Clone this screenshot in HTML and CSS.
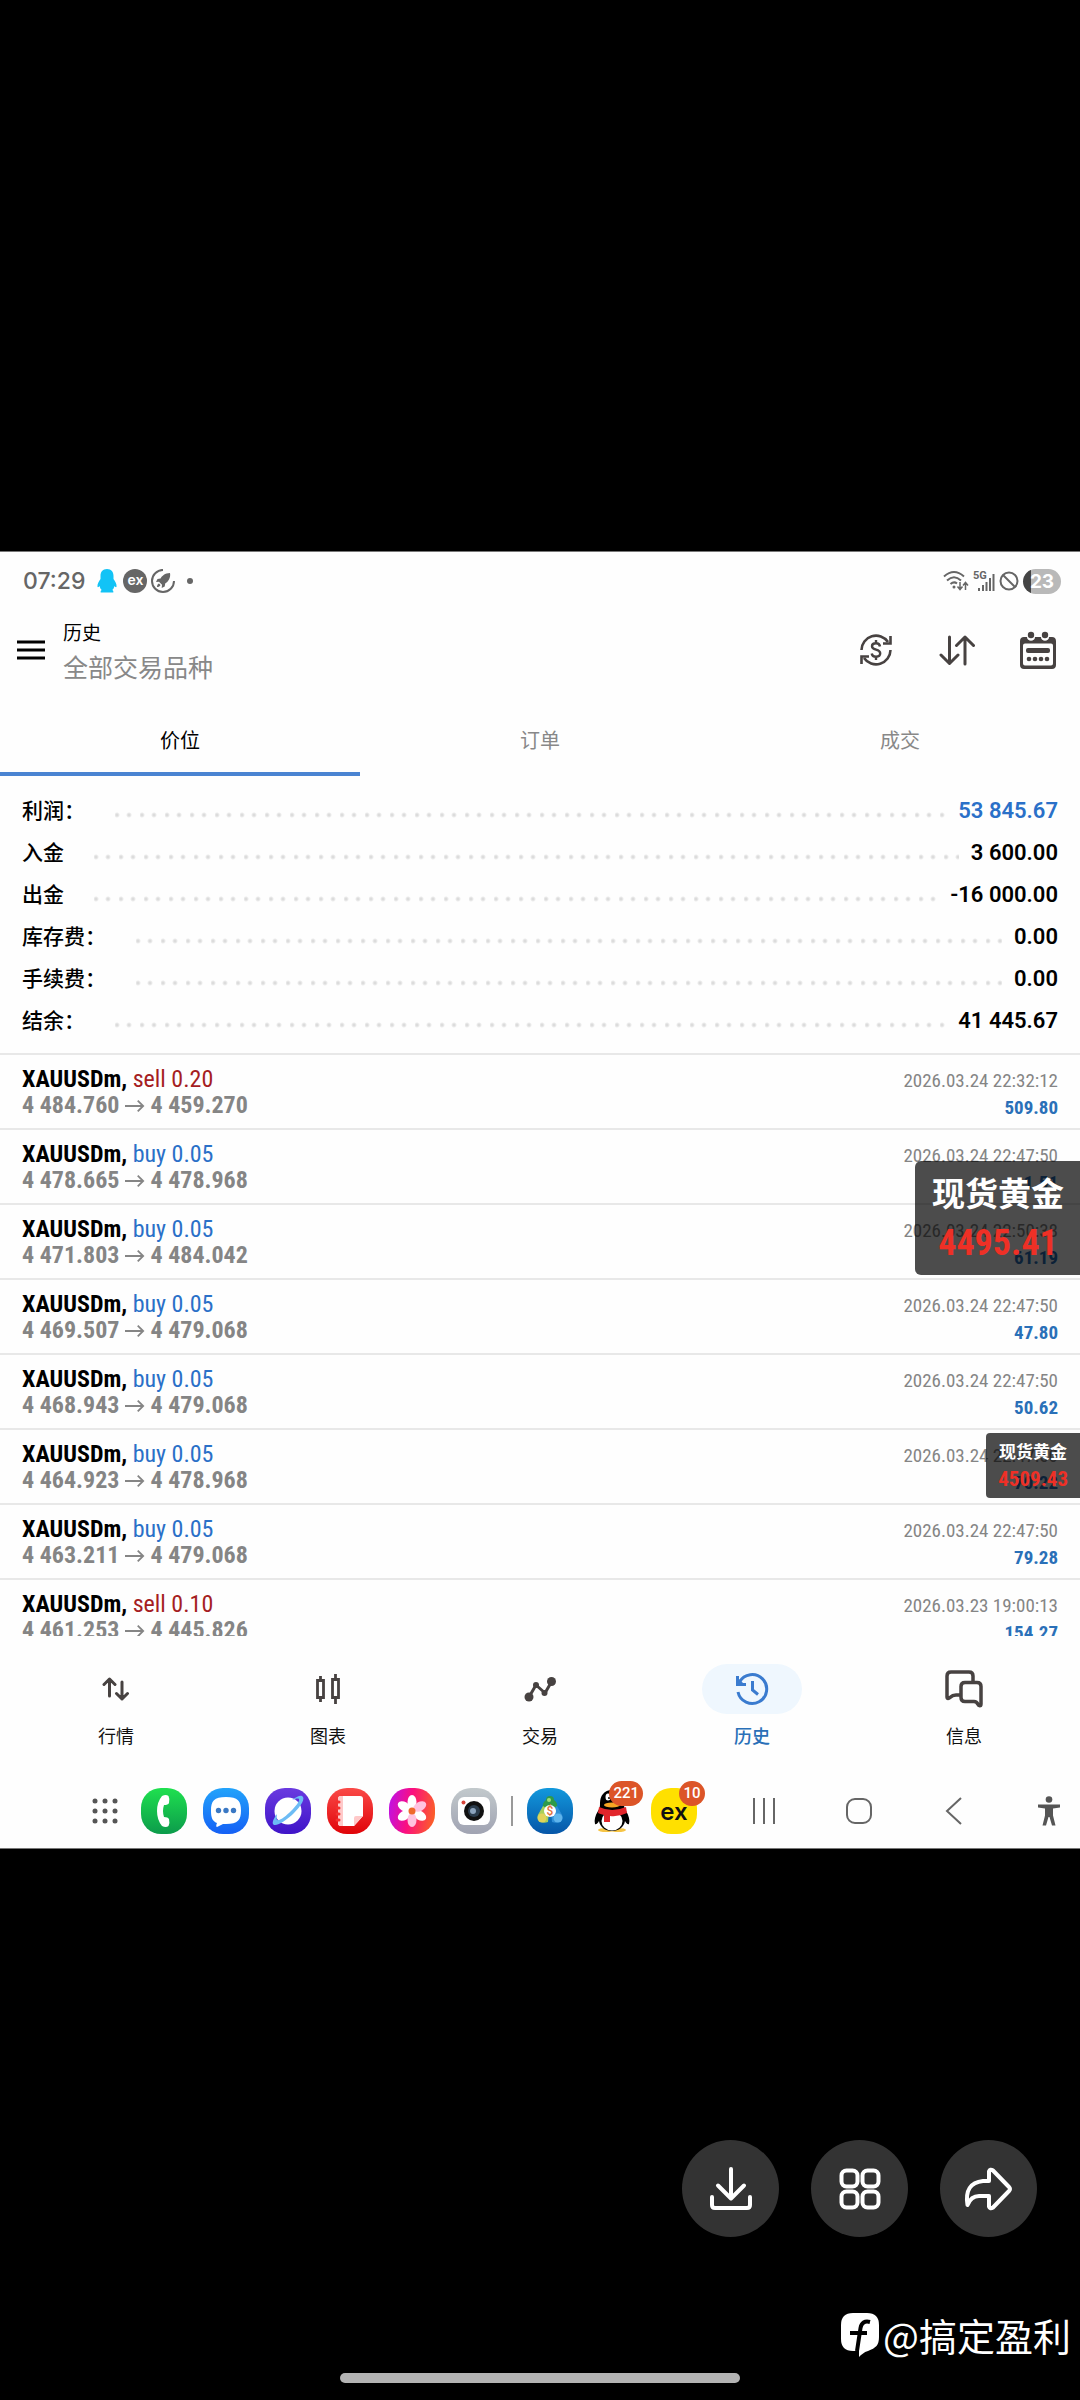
FILE: index.html
```html
<!DOCTYPE html>
<html lang="zh-CN">
<head>
   <meta charset="utf-8">
   <meta name="viewport" content="width=device-width, initial-scale=1">
   <title>历史</title>
   <link rel="stylesheet" href="styles.css">
</head>
<body>
   <div class="viewer">
      <main class="screen">

         <!-- status bar -->
         <div class="status-bar">
            <span class="clock">07:29</span>
            <svg class="st-qq" width="20" height="24" viewBox="0 0 20 24"><path fill="#12c3f6" d="M10 0c4.500 0 6.500 3 6.500 7v3c1.500 2 3.500 5 3 8-.8.500-1.500-.4-2.200-1-.2 2-1 3-2 4 1 .6 1.200 1.500 1 2.500H3.700c-.2-1 0-1.900 1-2.500-1-1-1.800-2-2-4-.7.600-1.400 1.500-2.200 1-.5-3 1.500-6 3-8V7c0-4 2-7 6.500-7z"/></svg>
            <span class="st-ex">ex</span>
            <svg class="st-rocket" width="24" height="24" viewBox="0 0 24 24"><path fill="none" stroke="#666" stroke-width="2" d="M12 1A11 11 0 1 0 23 12M4 4.500A11 11 0 0 1 12 1"/><path fill="#666" d="M19 4c-5 0-8 3-9.500 5.500L6.500 10 5 13l3-.3 3 3L10.700 19l3-1.500.500-3C17 13 20 9 19 4zM8 14.500c-1.500.500-2 2-2 3.500 1.500 0 3-.5 3.500-2z"/></svg>
            <span class="st-dot"></span>
            <span class="status-right">
               <svg width="26" height="22" viewBox="0 0 26 22"><g fill="none" stroke="#666" stroke-width="2"><path d="M1 6.500Q11-2.500 21 6.500M4 10.500Q11 4 18 10.500M7.500 14Q11 11 14 13.500"/><path stroke-width="1.500" d="M17 12v7M14.500 16.500l2.500 3 2.500-3M22.500 20v-7M20 15.500l2.500-3 2.500 3"/></g><circle cx="11" cy="17" r="1.500" fill="#666"/></svg>
               <svg width="22" height="22" viewBox="0 0 22 22"><text x="0" y="9" class="st-5g">5G</text><path stroke="#666" stroke-width="2" d="M6 21v-3M10 21v-6M13.500 21v-9M17 21V8M20.500 21V4"/></svg>
               <svg width="20" height="20" viewBox="0 0 20 20"><circle cx="10" cy="10" r="8.500" fill="none" stroke="#666" stroke-width="2"/><path stroke="#666" stroke-width="2" d="M4 4l12 12"/></svg>
               <span class="battery">23</span>
            </span>
         </div>

         <!-- app bar -->
         <header class="app-bar">
            <button class="icon-btn menu-btn" aria-label="菜单">
               <svg width="28" height="20" viewBox="0 0 28 20"><path stroke="#000" stroke-width="3" d="M0 2h28M0 10h28M0 18h28"/></svg>
            </button>
            <div class="titles">
               <h1 class="title">历史</h1>
               <p class="subtitle">全部交易品种</p>
            </div>
            <div class="actions">
               <button class="icon-btn" aria-label="货币">
                  <svg width="34" height="34" viewBox="0 0 34 34" fill="none" stroke="#474241" stroke-width="2.600"><path d="M2.500 17A14.500 14.500 0 0 1 29 9M31.500 17A14.500 14.500 0 0 1 5 25"/><path d="M31.500 3v7.500h-7.500M2.500 31v-7.500H10"/><path stroke-width="2.400" d="M21 13.500c-.3-2.200-2-3.200-4-3.200-2.300 0-4 1-4 3 0 4.400 8.200 2.400 8.200 7 0 2.200-1.800 3.400-4.200 3.400-2.200 0-4-1.200-4.300-3.200M17 7v3.500M17 23.500V27"/></svg>
               </button>
               <button class="icon-btn" aria-label="排序">
                  <svg width="36" height="32" viewBox="0 0 36 32" fill="none" stroke="#474241" stroke-width="3" stroke-linejoin="round" stroke-linecap="round"><path d="M10.500 3v26M2 21l8.500 8.500L19 21M26 30V3M17.500 11.500L26 3l8.500 8.500"/></svg>
               </button>
               <button class="icon-btn" aria-label="日期">
                  <svg width="36" height="38" viewBox="0 0 36 38"><path fill="#474241" fill-rule="evenodd" d="M4 6h3c0 5 8 5 8 0h6c0 5 8 5 8 0h3c2.500 0 4 1.500 4 4v24c0 2.500-1.500 4-4 4H4c-2.500 0-4-1.500-4-4V10c0-2.500 1.500-4 4-4zM5 12.500q-2 0-2 2v18q0 2 2 2h26q2 0 2-2v-18q0-2-2-2z"/><g fill="#474241"><circle cx="11" cy="4" r="3.200"/><circle cx="25" cy="4" r="3.200"/><rect x="6" y="17" width="24" height="5" rx="2"/><circle cx="9" cy="28" r="2.300"/><circle cx="15" cy="28" r="2.300"/><circle cx="21" cy="28" r="2.300"/><circle cx="27" cy="28" r="2.300"/></g></svg>
               </button>
            </div>
         </header>

         <nav class="tabs">
            <button class="tab tab-selected">价位</button>
            <button class="tab">订单</button>
            <button class="tab">成交</button>
         </nav>

         <!-- account totals -->
         <dl class="summary">
            <div class="sum-row"><dt>利润：</dt><dd class="profit">53 845.67</dd></div>
            <div class="sum-row"><dt>入金</dt><dd>3 600.00</dd></div>
            <div class="sum-row"><dt>出金</dt><dd>-16 000.00</dd></div>
            <div class="sum-row"><dt>库存费：</dt><dd>0.00</dd></div>
            <div class="sum-row"><dt>手续费：</dt><dd>0.00</dd></div>
            <div class="sum-row"><dt>结余：</dt><dd>41 445.67</dd></div>
         </dl>

         <div class="history">
            <ul class="deals">
               <li class="deal">
                  <div><p class="symbol">XAUUSDm,<span class="sell"> sell 0.20</span></p><p class="prices">4 484.760 <svg class="arrow" viewBox="0 0 22 14"><path d="M0 7h20M14 1l6 6-6 6"/></svg> 4 459.270</p></div>
                  <div class="deal-right"><time>2026.03.24 22:32:12</time><p class="amount">509.80</p></div>
               </li>
               <li class="deal">
                  <div><p class="symbol">XAUUSDm,<span class="buy"> buy 0.05</span></p><p class="prices">4 478.665 <svg class="arrow" viewBox="0 0 22 14"><path d="M0 7h20M14 1l6 6-6 6"/></svg> 4 478.968</p></div>
                  <div class="deal-right"><time>2026.03.24 22:47:50</time><p class="amount">1.51</p></div>
               </li>
               <li class="deal">
                  <div><p class="symbol">XAUUSDm,<span class="buy"> buy 0.05</span></p><p class="prices">4 471.803 <svg class="arrow" viewBox="0 0 22 14"><path d="M0 7h20M14 1l6 6-6 6"/></svg> 4 484.042</p></div>
                  <div class="deal-right"><time>2026.03.24 22:50:38</time><p class="amount">61.19</p></div>
               </li>
               <li class="deal">
                  <div><p class="symbol">XAUUSDm,<span class="buy"> buy 0.05</span></p><p class="prices">4 469.507 <svg class="arrow" viewBox="0 0 22 14"><path d="M0 7h20M14 1l6 6-6 6"/></svg> 4 479.068</p></div>
                  <div class="deal-right"><time>2026.03.24 22:47:50</time><p class="amount">47.80</p></div>
               </li>
               <li class="deal">
                  <div><p class="symbol">XAUUSDm,<span class="buy"> buy 0.05</span></p><p class="prices">4 468.943 <svg class="arrow" viewBox="0 0 22 14"><path d="M0 7h20M14 1l6 6-6 6"/></svg> 4 479.068</p></div>
                  <div class="deal-right"><time>2026.03.24 22:47:50</time><p class="amount">50.62</p></div>
               </li>
               <li class="deal">
                  <div><p class="symbol">XAUUSDm,<span class="buy"> buy 0.05</span></p><p class="prices">4 464.923 <svg class="arrow" viewBox="0 0 22 14"><path d="M0 7h20M14 1l6 6-6 6"/></svg> 4 478.968</p></div>
                  <div class="deal-right"><time>2026.03.24 22:47:50</time><p class="amount">70.22</p></div>
               </li>
               <li class="deal">
                  <div><p class="symbol">XAUUSDm,<span class="buy"> buy 0.05</span></p><p class="prices">4 463.211 <svg class="arrow" viewBox="0 0 22 14"><path d="M0 7h20M14 1l6 6-6 6"/></svg> 4 479.068</p></div>
                  <div class="deal-right"><time>2026.03.24 22:47:50</time><p class="amount">79.28</p></div>
               </li>
               <li class="deal">
                  <div><p class="symbol">XAUUSDm,<span class="sell"> sell 0.10</span></p><p class="prices">4 461.253 <svg class="arrow" viewBox="0 0 22 14"><path d="M0 7h20M14 1l6 6-6 6"/></svg> 4 445.826</p></div>
                  <div class="deal-right"><time>2026.03.23 19:00:13</time><p class="amount">154.27</p></div>
               </li>
            </ul>
            <!-- floating quote windows -->
            <aside class="quote quote-big"><p>现货黄金</p><p class="quote-price">4495.41</p></aside>
            <aside class="quote quote-small"><p>现货黄金</p><p class="quote-price">4509.43</p></aside>
         </div>

         <nav class="bottom-nav">
            <a href="#quotes" class="nav-item">
               <span class="nav-icon"><svg width="28" height="26" viewBox="0 0 28 26" fill="none" stroke="#474241" stroke-width="3" stroke-linecap="round" stroke-linejoin="round"><path d="M7.500 20V3M2 8.500L7.500 3 13 8.500M20 6v17M14.500 17.500L20 23l5.500-5.500"/></svg></span>行情</a>
            <a href="#charts" class="nav-item">
               <span class="nav-icon"><svg width="26" height="32" viewBox="0 0 26 32" fill="none" stroke="#474241" stroke-width="2.800"><path d="M2.500 7.500h6v17h-6zM5.500 3v4M5.500 25v4M17.500 6.500h6v18h-6zM20.500 1v5M20.500 25v6"/></svg></span>图表</a>
            <a href="#trade" class="nav-item">
               <span class="nav-icon"><svg width="32" height="28" viewBox="0 0 32 28"><path fill="none" stroke="#474241" stroke-width="3" stroke-linejoin="round" d="M5 22l7-12 9 8 7-12"/><g fill="#474241"><circle cx="5" cy="22" r="4.500"/><circle cx="12" cy="10" r="3"/><circle cx="20.500" cy="18" r="3"/><circle cx="27.500" cy="6.500" r="4.500"/></g></svg></span>交易</a>
            <a href="#history" class="nav-item nav-selected">
               <span class="nav-icon"><svg width="34" height="34" viewBox="0 0 34 34" fill="none" stroke="#3a7bcf" stroke-width="3"><path d="M3 20a14.500 14.500 0 1 0 1.500-10"/><path d="M2.500 4v8.500h8.500"/><path fill="#3a7bcf" stroke="none" d="M2 5l9 9H2z"/><path d="M17.500 9v9l5.500 4.500"/></svg></span>历史</a>
            <a href="#messages" class="nav-item">
               <span class="nav-icon"><svg width="40" height="38" viewBox="0 0 40 38" fill="none" stroke="#474241" stroke-width="3.500" stroke-linejoin="round"><path d="M29 11V6q0-4-4-4H7Q3 2 3 6v21c0 2 2 1.500 3 .5 2-2 4-2.500 6-2.500h5"/><path d="M21 12.500h12q4 0 4 4V34c0 2.500-2.500 2-3 .5-.8-2-2-3-4-3h-9q-4 0-4-4v-11q0-4 4-4z"/></svg></span>信息</a>
         </nav>

         <!-- system taskbar -->
         <div class="taskbar">
            <button class="task-btn apps-btn" aria-label="应用">
               <svg width="26" height="26" viewBox="0 0 26 26" fill="#555"><circle cx="3" cy="3" r="2.500"/><circle cx="13" cy="3" r="2.500"/><circle cx="23" cy="3" r="2.500"/><circle cx="3" cy="13" r="2.500"/><circle cx="13" cy="13" r="2.500"/><circle cx="23" cy="13" r="2.500"/><circle cx="3" cy="23" r="2.500"/><circle cx="13" cy="23" r="2.500"/><circle cx="23" cy="23" r="2.500"/></svg>
            </button>
            <div class="dock">
               <button class="task-btn app app-phone" aria-label="电话"><svg viewBox="0 0 46 46"><path fill="#fff" d="M21 8q4-2 6.500 0 1.500 3 .5 7-1 2-5 2-2 6 0 12 4 0 5 2 1 4-.5 7-2.500 2-6.500 0-5-6-5-15T21 8z"/></svg></button>
               <button class="task-btn app app-sms" aria-label="信息"><svg viewBox="0 0 46 46"><path fill="#fff" d="M23 9c12 0 15 4 15 13.500S35 36 23 36h-3l-6 3c-1 0-1-2 0-4-5-2-6-6-6-12.500C8 13 11 9 23 9z"/><g fill="#3a78c4"><circle cx="15.500" cy="22.500" r="2.700"/><circle cx="23" cy="22.500" r="2.700"/><circle cx="30.500" cy="22.500" r="2.700"/></g></svg></button>
               <button class="task-btn app app-web" aria-label="浏览器"><svg viewBox="0 0 46 46"><circle cx="23" cy="23" r="13.500" fill="#fff"/><path fill="#6dbcf5" d="M37 8c4 2-1 10-8 17S10 40 8 36c-1-2 1-6 4-10 0 3-1 5 0 6 3 1 9-4 14-9s9-10 8-12c-1-1-4 0-7 1 4-3 8-5 10-4z"/></svg></button>
               <button class="task-btn app app-notes" aria-label="笔记"><svg viewBox="0 0 46 46"><path fill="#fff" d="M14 8h19q3 0 3 3v17L27 38H14q-3 0-3-3V11q0-3 3-3z"/><path fill="#ffc9c9" d="M11 11q0-3 3-3h2v30h-2q-3 0-3-3zM36 28H29q-2 0-2 2v8z"/><path stroke="#f4302f" stroke-width="3" stroke-linecap="round" d="M10 14h2M10 20h2M10 26h2M10 32h2"/></svg></button>
               <button class="task-btn app app-gallery" aria-label="相册"><svg viewBox="0 0 46 46"><g fill="#fff"><ellipse cx="23" cy="14" rx="4.500" ry="7"/><ellipse cx="23" cy="14" rx="4.500" ry="7" transform="rotate(120 23 23)"/><ellipse cx="23" cy="14" rx="4.500" ry="7" transform="rotate(240 23 23)"/></g><g fill="#ffc3e0"><ellipse cx="23" cy="14" rx="4.500" ry="7" transform="rotate(60 23 23)"/><ellipse cx="23" cy="14" rx="4.500" ry="7" transform="rotate(180 23 23)"/><ellipse cx="23" cy="14" rx="4.500" ry="7" transform="rotate(300 23 23)" fill="#fff"/></g><circle cx="23" cy="23" r="3.500" fill="#ef6a2c"/></svg></button>
               <button class="task-btn app app-camera" aria-label="相机"><svg viewBox="0 0 46 46"><rect x="7" y="9" width="32" height="28" rx="6" fill="#fff"/><circle cx="23" cy="23" r="10" fill="#111"/><circle cx="23" cy="23" r="6" fill="#2b3c4c"/><circle cx="22" cy="23" r="3" fill="#8ba3bd"/><circle cx="12.500" cy="14.500" r="2" fill="#d8453a"/></svg></button>
            </div>
            <span class="dock-sep"></span>
            <div class="dock">
               <button class="task-btn app app-mt" aria-label="MetaTrader"><svg viewBox="0 0 46 46"><path fill="#2f9a4a" d="M23 8q4 0 4 4 4 3 3 7l-4 3h-6l-4-3q-1-4 3-7 0-4 4-4z"/><path fill="#a9cf5a" d="M16 18l6 4-1 12q-5 2-9-1-3-4 0-8z"/><path fill="#2f8fd8" d="M30 18l-6 4 1 12q5 2 9-1 3-4 0-8z"/><circle cx="15" cy="30" r="4.500" fill="#e0d35a"/><circle cx="31" cy="30" r="4.500" fill="#5fb4ec"/><circle cx="22" cy="12" r="2" fill="#9be07c"/><circle cx="23" cy="23" r="6" fill="#fff"/><text x="23" y="27" class="mt-sign">$</text></svg></button>
               <button class="task-btn app" aria-label="QQ"><svg viewBox="0 0 46 46"><ellipse cx="17" cy="42" rx="8" ry="2" fill="#f6c445"/><ellipse cx="29" cy="42" rx="8" ry="2" fill="#f6c445"/><path d="M23 2c8 0 12 6 12 13 0 3 0 5 2 8 3 5 4 9 3 13-1 1-3-1-4-3-1 6-6 10-13 10S11 39 10 33c-1 2-3 4-4 3-1-4 0-8 3-13 2-3 2-5 2-8C11 8 15 2 23 2z"/><ellipse cx="23" cy="33" rx="10.500" ry="9.500" fill="#fff"/><ellipse cx="19" cy="9" rx="2.500" ry="3.500" fill="#fff"/><circle cx="20" cy="10" r="1"/><ellipse cx="23" cy="17" rx="8" ry="2.500" fill="#f5a623"/><path fill="#e2252b" d="M10 19q13 6 27 0l1 6q-8 4-17 3v6h-6v-7q-4-1-6-2z"/></svg><span class="badge">221</span></button>
               <button class="task-btn app app-ex" aria-label="Exness">ex<span class="badge">10</span></button>
            </div>
            <div class="sys-keys">
               <button class="task-btn" aria-label="最近"><svg width="24" height="28" viewBox="0 0 24 28" stroke="#666" stroke-width="2"><path d="M2 1v26M12 1v26M22 1v26"/></svg></button>
               <button class="task-btn" aria-label="主页"><svg width="28" height="28" viewBox="0 0 28 28"><rect x="2" y="2" width="24" height="24" rx="8" fill="none" stroke="#666" stroke-width="2"/></svg></button>
               <button class="task-btn" aria-label="返回"><svg width="18" height="28" viewBox="0 0 18 28"><path fill="none" stroke="#666" stroke-width="2" d="M16 1L2 14l14 13"/></svg></button>
               <button class="task-btn" aria-label="无障碍"><svg width="22" height="30" viewBox="0 0 22 30" fill="#555"><circle cx="11" cy="3.500" r="3.300"/><path d="M0 8.500h22v3l-7 1v7l2.500 10H14L11.500 21h-1L8 29.500H4.500L7 19.500v-7l-7-1z"/></svg></button>
            </div>
         </div>
      </main>

      <footer class="viewer-footer">
         <div class="round-btns">
            <button class="round-btn" aria-label="下载"><svg width="44" height="44" viewBox="0 0 44 44"><path d="M22 2v29M9 18.500l13 13 13-13M3 30v8q0 3 3 3h32q3 0 3-3v-8"/></svg></button>
            <button class="round-btn" aria-label="更多"><svg width="44" height="44" viewBox="0 0 44 44"><rect x="3.500" y="3.500" width="16" height="16" rx="5"/><rect x="24.500" y="3.500" width="16" height="16" rx="5"/><rect x="3.500" y="24.500" width="16" height="16" rx="5"/><rect x="24.500" y="24.500" width="16" height="16" rx="5"/></svg></button>
            <button class="round-btn" aria-label="分享"><svg width="48" height="44" viewBox="0 0 48 44"><path d="M24 14V4.500q1-3 4-1L44 20q2 2 0 4L28 40.500q-3 2-4-1V29H14q-8 0-11.500 9Q-1 16 18 14z"/></svg></button>
         </div>
         <p class="watermark">
            <svg width="38" height="44" viewBox="0 0 38 44"><path fill="#fff" d="M12 0h14q12 0 12 12v12c0 8-3 11-11 14-4 1-7 4-9 6v-6h-6Q0 38 0 26V12Q0 0 12 0z"/><path fill="none" stroke="#000" stroke-width="4" d="M29 9q-8-2-9.500 6L16 38M9 20h17"/></svg>
            @搞定盈利
         </p>
         <div class="home-bar"></div>
      </footer>
   </div>
</body>
</html>
```
FILE: styles.css
```css
* {
   box-sizing: border-box;
}
body, h1, p, ul, dl, dd {
   margin: 0;
   padding: 0;
}
body {
   background-color: #000;
   font-family: Roboto, "Noto Sans CJK SC", sans-serif;
}
button {
   border: 0;
   padding: 0;
   background: none;
   font-family: inherit;
   cursor: pointer;
}
svg {
   display: block;
}
.viewer {
   display: grid;
   grid-template-rows: 1fr auto 1fr;
   min-height: 100vh;
}
.screen {
   grid-row: 2;
   background-color: #fefefe;
   border-top: 1px solid #777;
   border-bottom: 1px solid #777;
}

/* status bar */
.status-bar {
   display: flex;
   align-items: center;
   height: 58px;
   padding: 0 19px 0 23px;
   color: #666;
}
.clock {
   font-family: Inter, sans-serif;
   font-size: 23px;
   font-weight: 500;
   margin-right: 12px;
}
.st-qq {
   margin-right: 6px;
}
.st-ex {
   width: 24px;
   height: 24px;
   border-radius: 50%;
   background-color: #666;
   color: #fff;
   font-family: Inter, sans-serif;
   font-size: 14px;
   font-weight: 600;
   line-height: 21px;
   text-align: center;
   margin-right: 4px;
}
.st-dot {
   width: 6px;
   height: 6px;
   border-radius: 50%;
   background-color: #666;
   margin-left: 12px;
}
.status-right {
   display: flex;
   align-items: center;
   gap: 4px;
   margin-left: auto;
}
.st-5g {
   font-size: 11px;
   font-weight: 700;
   fill: #666;
}
.battery {
   width: 38px;
   height: 25px;
   border-radius: 13px;
   background: linear-gradient(to right, #444 8px, #b9b9b9 8px);
   color: #fff;
   font-family: Inter, sans-serif;
   font-size: 19px;
   font-weight: 700;
   line-height: 25px;
   text-align: center;
}

/* app bar */
.app-bar {
   display: flex;
   align-items: center;
   height: 80px;
   padding: 0 24px 0 17px;
}
.icon-btn {
   display: flex;
   align-items: center;
   justify-content: center;
   width: 36px;
   height: 40px;
}
.menu-btn {
   width: 28px;
   margin-right: 18px;
}
.titles {
   padding-top: 5px;
}
.title {
   font-size: 19px;
   font-weight: 400;
   line-height: 32px;
}
.subtitle {
   font-size: 25px;
   line-height: 38px;
   color: #888;
}
.actions {
   display: flex;
   gap: 45px;
   margin-left: auto;
}
.tabs {
   display: flex;
}
.tab {
   flex: 1;
   padding: 37px 0 17px;
   border-bottom: 4px solid transparent;
   font-size: 20px;
   line-height: 28px;
   color: #888;
}
.tab-selected {
   color: #000;
   border-color: #4a84d2;
}

/* totals */
.summary {
   padding: 14px 22px 11px;
}
.sum-row {
   display: flex;
   align-items: center;
   font-size: 21px;
   line-height: 42px;
   font-weight: 500;
}
/* dot leader, two dots per 25px tile */
.sum-row::after {
   content: "";
   order: 1;
   flex: 1;
   height: 42px;
   margin: 0 12px 0 30px;
   background-image: radial-gradient(circle at 2px 25px, #dcdcdc 1px, transparent 3px), radial-gradient(circle at 14px 25px, #dcdcdc 1px, transparent 3px);
   background-size: 25px 42px;
   background-repeat: repeat-x;
}
.sum-row dd {
   order: 2;
   font-size: 22px;
   font-weight: 600;
}
.sum-row .profit {
   color: #2a70c8;
}

.history {
   position: relative;
}
.deals {
   list-style: none;
   height: 583px;
   overflow: hidden;
}
.deal {
   display: flex;
   justify-content: space-between;
   height: 75px;
   padding: 11px 22px 0;
   border-top: 2px solid #e8e8e8;
   font-family: "Roboto Condensed", "Liberation Sans Narrow", Roboto, sans-serif;
   font-size: 24px;
   line-height: 26px;
}
.symbol {
   font-weight: 700;
}
.symbol span {
   font-weight: 400;
}
.sell {
   color: #a51d22;
}
.buy {
   color: #2a70c8;
}
.prices {
   font-weight: 700;
   color: #858585;
}
.arrow {
   display: inline-block;
   width: 20px;
   height: 14px;
   fill: none;
   stroke: #858585;
   stroke-width: 2;
}
.deal-right {
   padding-top: 1px;
   text-align: right;
   font-size: 19px;
   line-height: 27px;
   color: #858585;
}
.amount {
   font-weight: 700;
   color: #2a70b8;
}

.quote {
   position: absolute;
   right: 0;
   background-color: rgba(0, 0, 0, 0.7);
   color: #fff;
   font-weight: 700;
   text-align: center;
}
.quote-price {
   font-family: "Roboto Condensed", "Liberation Sans Narrow", Roboto, sans-serif;
   color: #ee3026;
}
.quote-big {
   top: 108px;
   padding: 10px 16px 8px 17px;
   border-radius: 6px 0 0 6px;
   font-size: 33px;
   line-height: 48px;
}
.quote-big .quote-price {
   font-size: 36px;
}
.quote-small {
   top: 380px;
   padding: 6px 12px 5px;
   border-radius: 4px 0 0 4px;
   font-size: 17px;
   line-height: 27px;
}
.quote-small .quote-price {
   font-size: 21px;
}

/* bottom nav */
.bottom-nav {
   display: flex;
   padding: 28px 10px 0;
}
.nav-item {
   flex: 1;
   display: flex;
   flex-direction: column;
   align-items: center;
   gap: 10px;
   font-size: 18px;
   line-height: 26px;
   color: #111;
   text-decoration: none;
}
.nav-icon {
   display: flex;
   align-items: center;
   justify-content: center;
   width: 100px;
   height: 50px;
   border-radius: 25px;
}
.nav-selected {
   color: #2a70b8;
   font-weight: 500;
}
.nav-selected .nav-icon {
   background-color: #eff7fe;
}

/* taskbar */
.taskbar {
   display: flex;
   align-items: center;
   padding: 38px 8px 14px 82px;
}
.task-btn {
   display: flex;
   align-items: center;
   justify-content: center;
   width: 46px;
   height: 46px;
}
.apps-btn {
   margin-right: 13px;
}
.dock {
   display: flex;
   gap: 16px;
}
.dock-sep {
   width: 2px;
   height: 30px;
   margin: 0 14px;
   background-color: #999;
}
.app {
   position: relative;
   border-radius: 20px;
}
.app svg {
   width: 46px;
   height: 46px;
}
.app-phone {
   background: linear-gradient(#1fe04f, #0c9b4b);
}
.app-sms {
   background: linear-gradient(#22a3fb, #1560f5);
}
.app-web {
   background: linear-gradient(#6a3ae0, #3f14c8);
}
.app-notes {
   background: linear-gradient(#fa4a48, #e00308);
}
.app-gallery {
   background: linear-gradient(100deg, #b911f0, #fb0f7e 45%, #fb6a1c);
}
.app-camera {
   background: linear-gradient(#c2c9cc, #a0a3b2);
}
.app-mt {
   background: linear-gradient(#1298dc, #0656a8);
}
.mt-sign {
   font-size: 12px;
   font-weight: 500;
   fill: #e2703a;
   text-anchor: middle;
}
.app-ex {
   background-color: #ffe000;
   color: #111;
   font-family: Inter, sans-serif;
   font-size: 24px;
   font-weight: 600;
}
.badge {
   position: absolute;
   top: -7px;
   right: -8px;
   min-width: 26px;
   height: 25px;
   padding: 0 4px;
   border-radius: 13px;
   background-color: #dc5528;
   color: #fff;
   font-family: Roboto, sans-serif;
   font-size: 15px;
   font-weight: 500;
   line-height: 25px;
   text-align: center;
}
.sys-keys {
   flex: 1;
   display: flex;
   justify-content: space-between;
   margin-left: 44px;
}

/* viewer controls */
.viewer-footer {
   grid-row: 3;
   display: flex;
   flex-direction: column;
   justify-content: flex-end;
   padding-bottom: 17px;
}
.round-btns {
   display: flex;
   justify-content: flex-end;
   gap: 32px;
   padding-right: 43px;
   margin-bottom: 70px;
}
.round-btn {
   display: flex;
   align-items: center;
   justify-content: center;
   width: 97px;
   height: 97px;
   border-radius: 50%;
   background-color: #333;
}
.round-btn svg {
   fill: none;
   stroke: #fff;
   stroke-width: 4;
   stroke-linecap: round;
   stroke-linejoin: round;
   overflow: visible;
}
.watermark {
   display: flex;
   align-items: center;
   justify-content: flex-end;
   gap: 4px;
   padding-right: 9px;
   margin-bottom: 10px;
   color: #fff;
   font-family: "Noto Sans CJK SC", sans-serif;
   font-size: 38px;
   line-height: 56px;
}
.home-bar {
   align-self: center;
   width: 37%;
   height: 10px;
   border-radius: 5px;
   background-color: #b3b3b3;
}
```
